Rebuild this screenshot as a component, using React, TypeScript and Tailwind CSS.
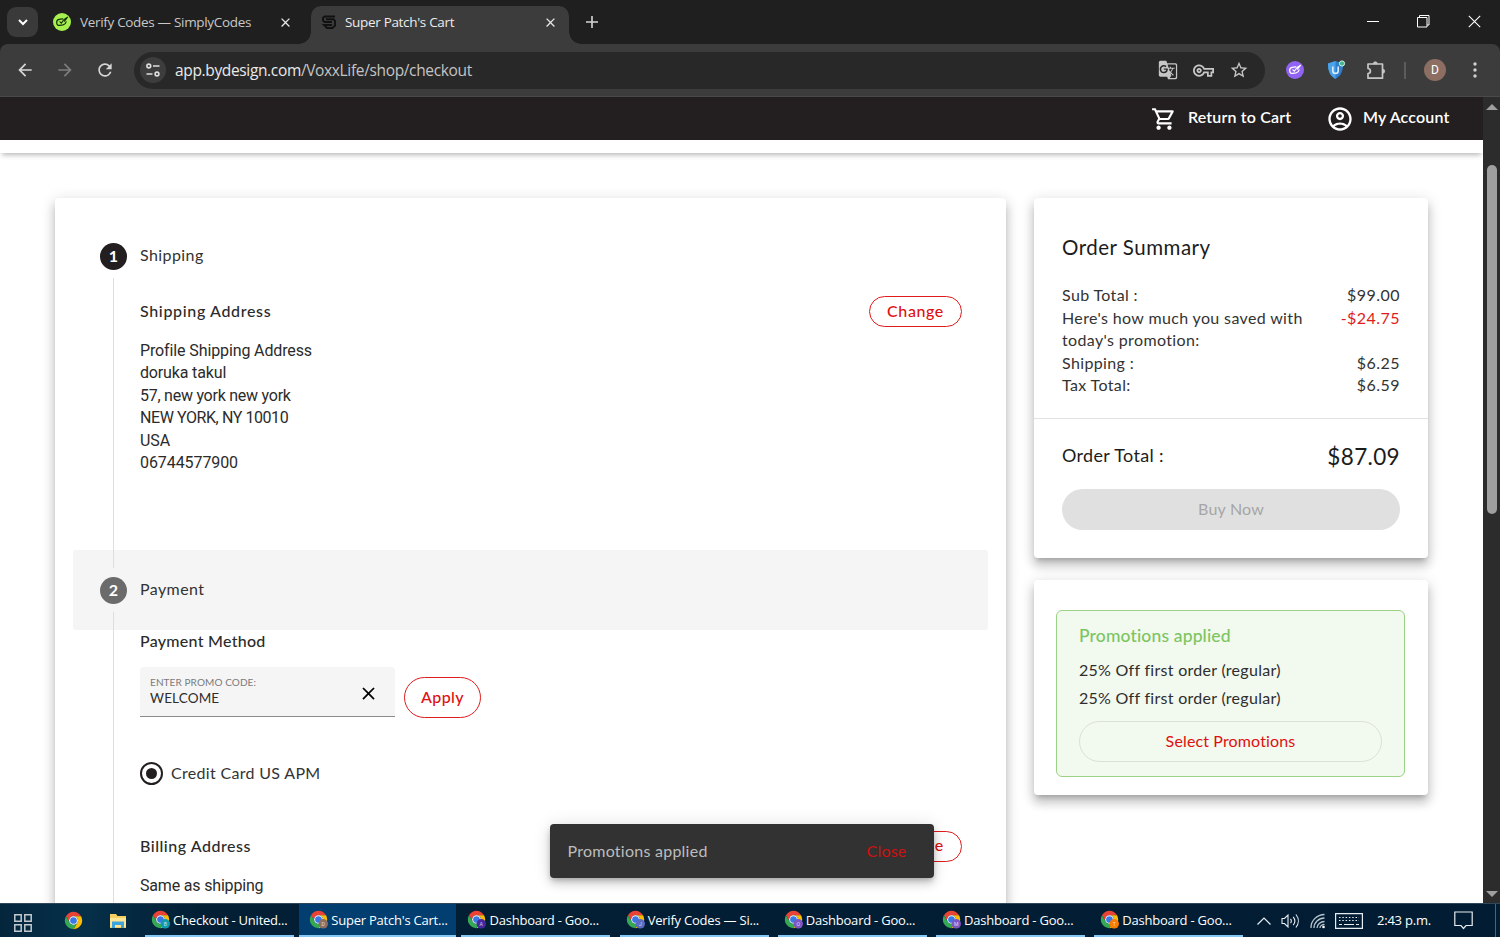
import React from 'react'
import {
  MdArrowBack,
  MdArrowForward,
  MdClose,
  MdGTranslate,
  MdOutlineAccountCircle,
  MdOutlineShoppingCart,
  MdOutlineVpnKey,
  MdRefresh,
  MdStarBorder,
} from 'react-icons/md'

const cardShadow =
  'shadow-[0_5px_5px_-3px_rgba(0,0,0,0.2),0_8px_10px_1px_rgba(0,0,0,0.14),0_3px_14px_2px_rgba(0,0,0,0.12)]'

const address = [
  { text: 'Profile Shipping Address', tracking: 'tracking-[-0.12px]' },
  { text: 'doruka takul', tracking: 'tracking-[-0.15px]' },
  { text: '57, new york new york', tracking: 'tracking-[-0.25px]' },
  { text: 'NEW YORK, NY 10010', tracking: 'tracking-[-0.42px]' },
  { text: 'USA', tracking: 'tracking-[-0.1px]' },
  { text: '06744577900', tracking: 'tracking-[-0.08px]' },
]

const summary = [
  { label: 'Sub Total :', value: '$99.00', saved: false },
  { label: "Here's how much you saved with today's promotion:", value: '-$24.75', saved: true },
  { label: 'Shipping :', value: '$6.25', saved: false },
  { label: 'Tax Total:', value: '$6.59', saved: false },
]

const taskbarItems = [
  { title: 'Checkout - United...', letter: 'B', color: '#0f9bb0', active: false },
  { title: "Super Patch's Cart...", letter: 'D', color: '#8d6e63', active: true },
  { title: 'Dashboard - Goo...', letter: 'A', color: '#4527a0', active: false },
  { title: 'Verify Codes — Si...', letter: 'J', color: '#5c6bc0', active: false },
  { title: 'Dashboard - Goo...', letter: 'O', color: '#7e57c2', active: false },
  { title: 'Dashboard - Goo...', letter: 'M', color: '#7e57c2', active: false },
  { title: 'Dashboard - Goo...', letter: 'T', color: '#f57c00', active: false },
]

const SimplyCodesIcon = ({ bg, fg }: { bg: string; fg: string }) => (
  <svg width="18" height="18" viewBox="0 0 18 18" fill="none" className="shrink-0">
    <circle cx="9" cy="9" r="9" fill={bg} />
    <path
      d="M9.800 5.800 6 6.400C4.300 6.800 3.500 8.200 3.700 9.900c.2 1.800 1.400 2.800 3 2.500l3.300-.5c1.700-.3 2.800-1.400 3.100-3"
      stroke={fg}
      strokeWidth="1.200"
      strokeLinecap="round"
      strokeLinejoin="round"
    />
    <path
      d="M7 8.800l1.300 1.400c1.100-2.300 3.300-4.700 6.200-5.900-1.200 1.200-1.500 2.300-3.200 3.900"
      stroke={fg}
      strokeWidth="1.200"
      strokeLinecap="round"
      strokeLinejoin="round"
    />
  </svg>
)

const SuperPatchIcon = () => (
  <svg width="14" height="14" viewBox="0 0 14 14" fill="none" stroke="#111" strokeWidth="1.900" className="shrink-0">
    <path d="M13 1.500H2.500L1 3v2.500L2.500 7H10" />
    <path d="M4 4.300h7.500L13 5.800v4.700L10.500 13H5L2 10h8" />
  </svg>
)

const ChromeIcon = ({ letter, color }: { letter?: string; color?: string }) => (
  <svg width="19" height="19" viewBox="0 0 48 48" className="shrink-0">
    <path d="M24 13H43.050A22 22 0 0 0 4.950 13L14.470 29.500A11 11 0 0 1 24 13Z" fill="#ea4335" />
    <path d="M24 13H43.050A22 22 0 0 0 4.950 13L14.470 29.500A11 11 0 0 1 24 13Z" fill="#fbbc04" transform="rotate(120 24 24)" />
    <path d="M24 13H43.050A22 22 0 0 0 4.950 13L14.470 29.500A11 11 0 0 1 24 13Z" fill="#34a853" transform="rotate(240 24 24)" />
    <circle cx="24" cy="24" r="11" fill="#fff" />
    <circle cx="24" cy="24" r="8.500" fill="#3b78e7" />
    {letter && (
      <>
        <circle cx="36" cy="35" r="12" fill={color} />
        <text x="36" y="40" fontSize="13" fontFamily="Roboto" fill="#fff" fillOpacity="0.75" textAnchor="middle">
          {letter}
        </text>
      </>
    )}
  </svg>
)

const TabStrip = () => (
  <div className="flex h-11 bg-[#1f1f1f] text-[13.5px] tracking-[-0.32px] text-[#dcdcdc]">
    <div className="ml-[7px] mt-[7px] flex h-[30px] w-[31px] items-center justify-center rounded-[9px] bg-[#3a3a3a]">
      <svg width="10" height="7" viewBox="0 0 10 7" fill="none" stroke="#fff" strokeWidth="2">
        <path d="M1 1l4 4 4-4" />
      </svg>
    </div>
    <div className="ml-[15px] flex w-[258px] items-center">
      <SimplyCodesIcon bg="#a6f04f" fg="#14300a" />
      <span className="ml-[9px] w-[198px] whitespace-nowrap pt-px text-[#c8c8c8]">Verify Codes — SimplyCodes</span>
      <MdClose size={15} className="text-[#e6e6e6]" />
    </div>
    <div className="relative mt-[6px] flex w-[258px] items-center rounded-t-[10px] bg-[#3c3c3c] pb-[6px] pl-[11px]">
      <div className="absolute -left-3 bottom-0 h-3 w-3 bg-[radial-gradient(circle_at_0_0,#1f1f1f_11.5px,#3c3c3c_12px)]" />
      <div className="absolute -right-3 bottom-0 h-3 w-3 bg-[radial-gradient(circle_at_100%_0,#1f1f1f_11.5px,#3c3c3c_12px)]" />
      <SuperPatchIcon />
      <span className="ml-[9px] w-[198px] whitespace-nowrap pt-px text-[#ececec]">Super Patch's Cart</span>
      <MdClose size={15} className="text-[#e6e6e6]" />
    </div>
    <svg width="12" height="12" viewBox="0 0 12 12" stroke="#d6d6d6" strokeWidth="1.600" className="ml-[17px] mt-4">
      <path d="M6 0v12M0 6h12" />
    </svg>
    <div className="ml-auto mr-[19px] mt-[15px] flex gap-[38px]">
      <svg width="12" height="13" viewBox="0 0 12 13" stroke="#fff">
        <path d="M0 6.500h12" />
      </svg>
      <svg width="13" height="13" viewBox="0 0 13 13" fill="none" stroke="#fff">
        <path d="M.5 2.500h9.500v9.500H.5zM2.500 2.500v-2h9.500v9.500h-2" />
      </svg>
      <svg width="13" height="13" viewBox="0 0 13 13" stroke="#fff" strokeWidth="1.100">
        <path d="M.8.8l11.400 11.400M12.200.8.8 12.200" />
      </svg>
    </div>
  </div>
)

const Toolbar = () => (
  <div className="bg-[#1f1f1f]">
    <div className="flex h-[53px] items-center rounded-t-[8px] border-b border-[#4a4a4a] bg-[#3c3c3c] text-[#c7c7c7]">
      <MdArrowBack size={20} className="ml-[15px] text-[#d6d6d6]" />
      <MdArrowForward size={20} className="ml-5 text-[#7d7d7d]" />
      <MdRefresh size={20} className="ml-5 text-[#d6d6d6]" />
      <div className="ml-[19px] flex h-[37px] w-[1131px] items-center rounded-full bg-[#282828] pl-[6px]">
        <div className="flex h-[26px] w-[26px] items-center justify-center rounded-full bg-[#3d3d3d]">
          <svg width="14" height="14" viewBox="0 0 14 14" fill="none" stroke="#dedede" strokeWidth="1.600">
            <circle cx="2.800" cy="3" r="1.900" />
            <path d="M7 3h6.500M.5 11h6" />
            <circle cx="11" cy="11" r="1.900" />
          </svg>
        </div>
        <div className="ml-[9px] pt-[2px] text-[15.5px] tracking-[-0.35px] text-[#c4c4c4]">
          <span className="text-[#eaeaea]">app.bydesign.com</span>/VoxxLife/shop/checkout
        </div>
        <MdGTranslate size={20} className="ml-auto" />
        <MdOutlineVpnKey size={21} className="ml-[15px]" />
        <MdStarBorder size={20} className="ml-[15px] mr-4" />
      </div>
      <div className="ml-[21px]">
        <SimplyCodesIcon bg="#9163f2" fg="#fff" />
      </div>
      <svg width="20" height="20" viewBox="0 0 20 20" className="ml-[22px]">
        <path d="M9.500 1 17 3.500c0 7-1.500 12-7.500 15.500C3.500 15.500 2 10.500 2 3.500Z" fill="#2f7fd0" />
        <path d="M9.500 1 2 3.500c0 7 1.500 12 7.500 15.500Z" fill="#4ba3e8" />
        <path d="M6.800 6.500v4.200c0 3.600 5.400 3.600 5.400 0V6.500" fill="none" stroke="#dcecfa" strokeWidth="1.600" />
        <circle cx="16" cy="3.500" r="2.600" fill="#3fb98a" stroke="#d8f2e8" strokeWidth="1" />
      </svg>
      <svg width="20" height="20" viewBox="0 0 20 20" fill="none" stroke="#c7c7c7" strokeWidth="1.700" className="ml-5">
        <path d="M2 4h14.500v14.200H2v-4.500c3.200-.3 3.200-4.900 0-5.200Z" strokeLinejoin="round" />
        <path d="M7.300 3.800a2 2 0 0 1 4 0ZM16.700 9.200a2 2 0 0 1 0 4Z" fill="#c7c7c7" strokeWidth="0.800" />
      </svg>
      <div className="ml-[18px] h-[17px] w-[2px] bg-[#5c5c5c]" />
      <div className="ml-[18px] flex h-[22px] w-[22px] items-center justify-center rounded-full bg-[#8d6e63] font-['Roboto'] text-[12px] text-white">
        D
      </div>
      <svg width="4" height="16" viewBox="0 0 4 16" fill="#d0d0d0" className="ml-[27px]">
        <circle cx="2" cy="2" r="1.700" />
        <circle cx="2" cy="8" r="1.700" />
        <circle cx="2" cy="14" r="1.700" />
      </svg>
    </div>
  </div>
)

const SiteHeader = () => (
  <div className="relative h-14 bg-white shadow-[0_4px_5px_-2px_rgba(0,0,0,0.28)]">
    <div className="flex h-[43px] items-center bg-[#231f20] pr-[34px] text-[16px] font-semibold tracking-[0.15px] text-white">
      <MdOutlineShoppingCart size={26} className="ml-auto mt-px" />
      <span className="ml-[11px] w-[104px] whitespace-nowrap pb-[3px]">Return to Cart</span>
      <MdOutlineAccountCircle size={28} className="ml-[34px] mt-px" />
      <span className="ml-[9px] w-[86px] whitespace-nowrap pb-[3px]">My Account</span>
    </div>
  </div>
)

const StepHeader = ({ n, label, active }: { n: number; label: string; active?: boolean }) => (
  <div className={active ? 'flex h-20 items-center rounded-[3px] bg-[#f5f5f5] px-[27px]' : 'flex h-20 items-center px-[27px]'}>
    <div
      className={
        active
          ? 'flex h-[27px] w-[27px] items-center justify-center rounded-full bg-[#6b6b6b] font-bold text-white'
          : 'flex h-[27px] w-[27px] items-center justify-center rounded-full bg-[#231f20] font-bold text-white'
      }
    >
      {n}
    </div>
    <span className="ml-[13px] pb-[2px] tracking-[0.42px] text-[#333]">{label}</span>
  </div>
)

const ChangeButton = () => (
  <button className="h-[31px] w-[93px] rounded-full border border-[#e01b1b] pb-[2px] font-medium tracking-[0.6px] text-[#e01010]">
    Change
  </button>
)

const CheckoutCard = () => (
  <div className={`h-[760px] w-[951px] rounded-[4px] bg-white px-[18px] pt-[18px] ${cardShadow}`}>
    <StepHeader n={1} label="Shipping" />
    <div className="relative h-[254px] pl-[67px] pr-[26px]">
      <div className="absolute -bottom-[18px] -top-[18px] left-10 w-px bg-[#dedede]" />
      <div className="flex h-[31px] items-center justify-between">
        <span className="pb-[2px] font-medium tracking-[0.66px] text-[#2b2b2b]">Shipping Address</span>
        <ChangeButton />
      </div>
      <div className="mt-[13px] font-['Roboto'] leading-[22.4px] text-[#2b2b2b]">
        {address.map((line) => (
          <div key={line.text} className={line.tracking}>
            {line.text}
          </div>
        ))}
      </div>
    </div>

    <StepHeader n={2} label="Payment" active />
    <div className="relative h-[310px] pl-[67px] pr-[26px]">
      <div className="absolute -top-[18px] bottom-0 left-10 w-px bg-[#dedede]" />
      <div className="h-6 font-medium leading-[22px] tracking-[0.27px] text-[#2b2b2b]">Payment Method</div>
      <div className="mt-[13px] flex h-[51px] items-start">
        <div className="flex h-[50px] w-[255px] items-center rounded-t-[4px] border-b border-[#8c8c8c] bg-[#f5f5f5] pl-[10px] pr-4">
          <div className="mr-auto text-[#2e2e2e]">
            <div className="text-[10px] leading-[13px] tracking-[0.1px] text-[#7a7a7a]">ENTER PROMO CODE:</div>
            <div className="text-[13.5px] leading-[18px] tracking-[0.15px]">WELCOME</div>
          </div>
          <MdClose size={21} className="mt-[3px] text-black" />
        </div>
        <button className="ml-[9px] mt-[10px] h-[41px] w-[77px] rounded-full border border-[#e01b1b] pb-[2px] font-medium tracking-[0.4px] text-[#e01010]">
          Apply
        </button>
      </div>
      <div className="mt-[43px] flex h-6 items-center">
        <div className="flex h-[23px] w-[23px] items-center justify-center rounded-full border-2 border-[#231f20]">
          <div className="h-[11px] w-[11px] rounded-full bg-[#231f20]" />
        </div>
        <span className="ml-[8px] tracking-[0.32px] text-[#333]">Credit Card US APM</span>
      </div>
      <div className="mt-[46px] flex h-[30px] items-center justify-between">
        <span className="pb-px font-medium tracking-[0.52px] text-[#2b2b2b]">Billing Address</span>
        <ChangeButton />
      </div>
      <div className="mt-[14px] font-['Roboto'] leading-[22.4px] tracking-[-0.18px] text-[#2b2b2b]">Same as shipping</div>
    </div>
  </div>
)

const OrderSummary = () => (
  <div className={`h-[360px] rounded-[4px] bg-white ${cardShadow}`}>
    <div className="h-[221px] border-b border-[#e2e2e2] px-7 pt-[35px]">
      <h2 className="text-[20.5px] leading-7 tracking-[0.5px] text-[#1c1c1c]">Order Summary</h2>
      <div className="mt-[23.400px] leading-[22.4px] text-[#333]">
        {summary.map((row) => (
          <div key={row.label} className="flex justify-between">
            <span className="w-[250px] tracking-[0.36px]">{row.label}</span>
            <span className={row.saved ? 'tracking-[0.45px] text-[#e01b1b]' : 'tracking-[0.45px]'}>{row.value}</span>
          </div>
        ))}
      </div>
    </div>
    <div className="px-7 pt-5">
      <div className="flex h-9 items-center justify-between text-[#1c1c1c]">
        <span className="pb-[3px] text-[18px] tracking-[0.34px]">Order Total :</span>
        <span className="text-[22.5px] tracking-[0.35px]">$87.09</span>
      </div>
      <button className="mt-[14px] h-[41px] w-full rounded-full bg-[#e0e0e0] pb-[2px] tracking-[0.2px] text-[#a6a6a6]">
        Buy Now
      </button>
    </div>
  </div>
)

const Promotions = () => (
  <div className={`mt-[22px] h-[215px] rounded-[4px] bg-white pl-[22px] pr-[23px] pt-[30px] ${cardShadow}`}>
    <div className="h-[167px] rounded-[6px] border border-[#9bd286] bg-[#f2f9ee] px-[22px] pt-[13px] text-[#2e2e2e]">
      <div className="text-[17.5px] font-medium leading-6 tracking-[0.15px] text-[#7cc562]">Promotions applied</div>
      <div className="mt-[8px] leading-7 tracking-[0.28px]">
        <div>25% Off first order (regular)</div>
        <div>25% Off first order (regular)</div>
      </div>
      <button className="mt-[9px] h-[41px] w-full rounded-full border border-[#dcdfda] pb-[2px] tracking-[0.14px] text-[#e01010]">
        Select Promotions
      </button>
    </div>
  </div>
)

const Snackbar = () => (
  <div className="absolute left-[550px] top-[727px] flex h-[54px] w-[384px] items-center justify-between rounded-[4px] bg-[#323232] pl-[17.500px] pr-[27.500px] shadow-[0_3px_5px_-1px_rgba(0,0,0,0.2),0_6px_10px_rgba(0,0,0,0.14),0_1px_18px_rgba(0,0,0,0.12)]">
    <span className="tracking-[0.25px] text-[#bdbdbd]">Promotions applied</span>
    <span className="tracking-[0.2px] text-[#d01010]">Close</span>
  </div>
)

const Scrollbar = () => (
  <div className="flex w-[17px] flex-col items-center bg-[#2c2c2c]">
    <svg width="12" height="6" viewBox="0 0 12 6" fill="#9f9f9f" className="mt-[7px]">
      <path d="M6 0l6 6H0z" />
    </svg>
    <div className="mt-[55px] h-[349px] w-[10px] rounded-full bg-[#9f9f9f]" />
    <svg width="12" height="6" viewBox="0 0 12 6" fill="#9f9f9f" className="mb-[6px] mt-auto">
      <path d="M6 6l6-6H0z" />
    </svg>
  </div>
)

const Taskbar = () => (
  <div className="flex h-[34px] border-t border-[#30475a] bg-[linear-gradient(90deg,#04263d_0px,#06304a_80px,#021f35_200px,#021d33_100%)] text-[13px] tracking-[-0.22px] text-white">
    <svg width="18" height="18" viewBox="0 0 18 18" fill="none" stroke="#c3c9cf" strokeWidth="1.500" className="ml-[14px] mt-[10px]">
      <path d="M.8.800h6.400v6.400H.8zM10.800.800h6.400v6.400h-6.400zM.8 10.800h6.400v6.400H.8zM10.800 10.800h6.400v6.400h-6.400z" />
    </svg>
    <div className="ml-8 mt-[7px]">
      <ChromeIcon />
    </div>
    <svg width="18" height="16" viewBox="0 0 18 16" className="ml-[26px] mt-[9px]">
      <path d="M1 1h6l1.500 2H17v12H1z" fill="#f5ce62" />
      <path d="M1 5h16v9H1z" fill="#fde594" />
      <path d="M3 8.500h12V15h-3v-3H6v3H3z" fill="#3fa3dd" />
    </svg>
    <div className="ml-[13.500px] flex">
      {taskbarItems.map((item, i) => (
        <div key={i} className="flex w-[158.200px] justify-center">
          <div
            className={
              item.active
                ? 'flex w-[157px] items-center border-b-2 border-[#85c8f5] bg-[#023e6f] pl-[10px]'
                : 'flex w-[149px] items-center border-b-2 border-[#85c8f5] pl-[6px]'
            }
          >
            <ChromeIcon letter={item.letter} color={item.color} />
            <span className="ml-[3px] whitespace-nowrap pt-[3px]">{item.title}</span>
          </div>
        </div>
      ))}
    </div>
    <div className="ml-auto flex items-center">
      <svg width="14" height="8" viewBox="0 0 14 8" fill="none" stroke="#e8edf1" strokeWidth="1.200">
        <path d="M.5 7.500 7 1l6.500 6.500" />
      </svg>
      <svg width="19" height="16" viewBox="0 0 19 16" fill="none" stroke="#e8edf1" strokeWidth="1.100" className="ml-[10px]">
        <path d="M1 5.500h2.500L7 2v12l-3.500-3.500H1zM9.500 5.800c1 1.300 1 3.100 0 4.400M12.200 3.800c2 2.500 2 5.900 0 8.400M14.900 1.500c3.200 3.900 3.200 9.100 0 13" />
      </svg>
      <svg width="16" height="16" viewBox="0 0 16 16" fill="none" stroke="#b8c4ce" strokeWidth="1.300" className="ml-[10px]">
        <path d="M1 15A14 13 0 0 1 14.500 1.500M4 15A10.500 9.800 0 0 1 14.500 5M7 15a7.500 6.500 0 0 1 7.500-6.500M10 15a4.500 3.500 0 0 1 4.500-3.500" />
        <circle cx="13.500" cy="14" r="1.300" fill="#fff" stroke="none" />
      </svg>
      <svg width="28" height="16" viewBox="0 0 28 16" fill="none" stroke="#e8edf1" strokeWidth="1.200" className="ml-[9px]">
        <path d="M.6.600h26.800v14.800H.6z" />
        <path d="M4 4.500h20M4 7.500h20" strokeDasharray="1.500 1.800" />
        <path d="M4 11.500h3M9 11.500h10M21 11.500h3" />
      </svg>
      <span className="ml-[14px] w-[54px] whitespace-nowrap pt-px">2:43 p.m.</span>
      <svg width="19" height="19" viewBox="0 0 19 19" fill="none" stroke="#e8edf1" strokeWidth="1.200" className="ml-[23px]">
        <path d="M.8 1h17.400v13.500H12L9.500 17.500 7 14.500H.8z" />
      </svg>
      <div className="ml-[22px] mr-[4px] h-[33px] w-px bg-[#4d6273]" />
    </div>
  </div>
)

const App = () => {
  return (
    <div className="flex h-[937px] w-[1500px] flex-col overflow-hidden bg-white font-['Open_Sans','Noto_Sans',sans-serif]">
      <TabStrip />
      <Toolbar />
      <div className="flex h-[806px]">
        <div className="relative h-[806px] w-[1483px] overflow-hidden bg-white font-['Lato','Open_Sans',sans-serif] text-[16px]">
          <SiteHeader />
          <div className="flex gap-7 pl-[55px] pt-[45px]">
            <CheckoutCard />
            <div className="w-[394px]">
              <OrderSummary />
              <Promotions />
            </div>
          </div>
          <Snackbar />
        </div>
        <Scrollbar />
      </div>
      <Taskbar />
    </div>
  )
}

export default App
